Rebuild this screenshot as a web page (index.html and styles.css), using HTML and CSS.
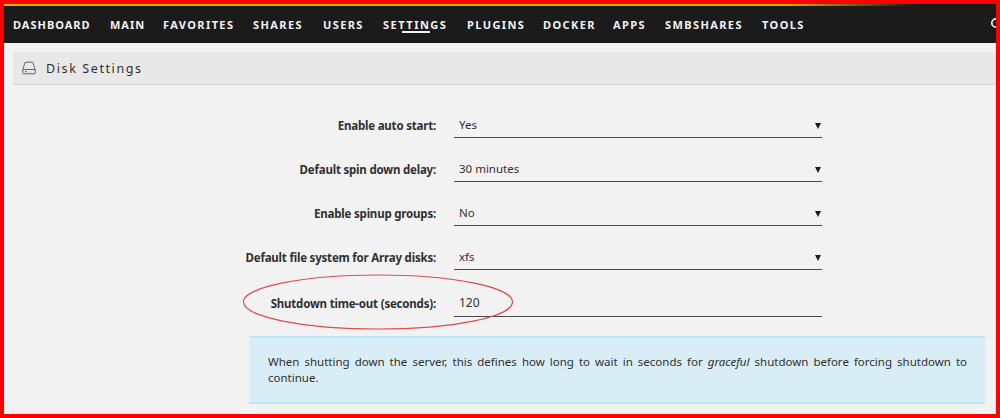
FILE: index.html
```
<!DOCTYPE html>
<html lang="en">
<head>
    <meta charset="UTF-8">
    <meta name="viewport" content="width=device-width, initial-scale=1.0">
    <title>Disk Settings</title>
    <link rel="stylesheet" href="styles.css">
</head>
<body>
    <div class="frame">
        <div class="usage-bar"></div>
        <nav class="menu">
            <a class="tight">DASHBOARD</a>
            <a class="tight">MAIN</a>
            <a>FAVORITES</a>
            <a>SHARES</a>
            <a>USERS</a>
            <a class="active">SETTINGS</a>
            <a>PLUGINS</a>
            <a>DOCKER</a>
            <a>APPS</a>
            <a>SMBSHARES</a>
            <a>TOOLS</a>
            <svg class="menu-icon" width="12" height="12" viewBox="0 0 12 12">
                <circle cx="6" cy="6" r="4.2" fill="none" stroke="#e8e8e8" stroke-width="1.8"/>
            </svg>
        </nav>

        <div class="title">
            <svg class="disk-icon" width="14" height="14" viewBox="0 0 14 14" fill="none" stroke="#6b6268">
                <path d="M3.2 1.2h7.6l2.4 7v4.1q0 .5-.5.5H1.3q-.5 0-.5-.5V8.2z"/>
                <path d="M.8 8.5h12.4M3 10.7h2"/>
            </svg>
            <h1>Disk Settings</h1>
        </div>

        <form class="settings">
            <div class="row">
                <label>Enable auto start:</label>
                <div class="field">Yes<span class="arrow"></span></div>
            </div>
            <div class="row">
                <label>Default spin down delay:</label>
                <div class="field">30 minutes<span class="arrow"></span></div>
            </div>
            <div class="row">
                <label>Enable spinup groups:</label>
                <div class="field">No<span class="arrow"></span></div>
            </div>
            <div class="row">
                <label>Default file system for Array disks:</label>
                <div class="field">xfs<span class="arrow"></span></div>
            </div>
            <div class="row timeout">
                <label>Shutdown time-out (seconds):</label>
                <div class="field">120</div>
                <svg class="marker" width="272" height="58" viewBox="0 0 272 58">
                    <ellipse cx="136" cy="29" rx="134.5" ry="27" fill="none" stroke="#e64a4a" stroke-width="1.2"/>
                </svg>
            </div>
        </form>

        <div class="help">
            <p>When shutting down the server, this defines how long to wait in seconds for <em>graceful</em> shutdown before forcing shutdown to continue.</p>
        </div>
    </div>
</body>
</html>
```
FILE: styles.css
```
body {
    margin: 0;
    font-family: "Noto Sans", "Open Sans", sans-serif;
    font-size: 12px;
    color: #303030;
    background-color: #f2f2f2;
}
.frame {
    box-sizing: border-box;
    height: 100vh;
    border: 4px solid #ff0000;
    overflow: hidden;
}
.usage-bar {
    height: 2px;
    background: linear-gradient(to right, #d6b800 0, #d6b800 780px, #1c1b1b 910px);
}
.menu {
    display: grid;
    grid-template-columns: 97px 53px 90px 70px 60px 84px 76px 70px 52px 97px 60px 1fr;
    align-items: center;
    height: 37px;
    padding-left: 9px;
    background-color: #1c1b1b;
    overflow: hidden;
}
.menu a {
    font-size: 11px;
    font-weight: bold;
    letter-spacing: 1.4px;
    line-height: 16px;
    color: #f2f2f2;
}
.menu a.tight {
    letter-spacing: 1px;
}
.menu a.active {
    letter-spacing: 1.5px;
    background: linear-gradient(#f2f2f2, #f2f2f2) 19px 100% / 28px 2px no-repeat;
}
.menu-icon {
    justify-self: end;
    margin: 0 -6px 3px 0;
}
.title {
    display: flex;
    align-items: center;
    box-sizing: border-box;
    height: 33px;
    margin: 9px 0 0 9px;
    padding-left: 9px;
    background-color: #e8e8e8;
    border-bottom: 1px solid #d4d4d4;
}
.title h1 {
    margin: 0 0 0 10px;
    font-size: 12.5px;
    font-weight: normal;
    letter-spacing: 1.6px;
}
.settings {
    margin-top: 27px;
}
.row {
    display: grid;
    grid-template-columns: 432px 368px;
    column-gap: 18px;
    height: 26px;
    margin-bottom: 18px;
    line-height: 28px;
}
.row label {
    text-align: right;
    font-weight: bold;
    font-size: 11.5px;
    letter-spacing: -0.2px;
    white-space: nowrap;
}
.field {
    display: flex;
    align-items: center;
    justify-content: space-between;
    box-sizing: border-box;
    height: 26px;
    padding: 1px 1px 0 5px;
    border-bottom: 1px solid #484848;
    font-size: 11.5px;
}
.arrow {
    margin-top: 1px;
    border: 3px solid transparent;
    border-top: 6px solid #1c1b1b;
    border-bottom: 0;
}
.row.timeout {
    position: relative;
    height: 29px;
    margin-bottom: 0;
    line-height: 32px;
}
.timeout .field {
    height: 29px;
    padding-top: 2px;
    font-size: 12px;
}
/* red oval drawn over the time-out row */
.marker {
    position: absolute;
    left: 238px;
    top: -15px;
}
.help {
    box-sizing: border-box;
    width: 736px;
    height: 68px;
    margin: 19px 0 0 245px;
    padding: 16px 18px 0 19px;
    background-color: #d9edf7;
    border-top: 2px solid #bce8f1;
    border-bottom: 2px solid #bce8f1;
}
.help p {
    margin: 0;
    font-size: 11.5px;
    line-height: 16px;
    text-align: justify;
}
```
